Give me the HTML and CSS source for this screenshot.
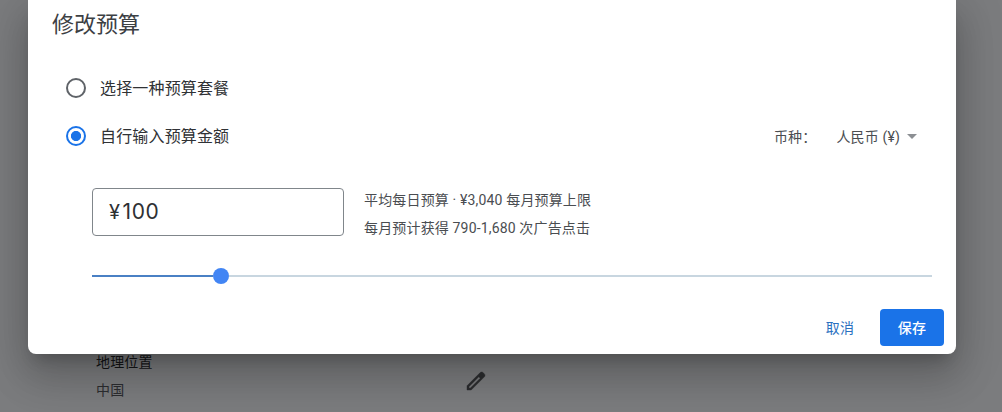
FILE: index.html
```
<!DOCTYPE html>
<html lang="zh-CN">
<head>
  <meta charset="utf-8">
  <title>修改预算</title>
  <link rel="stylesheet" href="styles.css">
</head>
<body>
  <div class="page">
    <div class="setting">
      <div class="setting-text">
        <div class="setting-name">地理位置</div>
        <div class="setting-value">中国</div>
      </div>
      <svg class="edit-icon" viewBox="0 0 24 24">
        <path d="M20.41 4.94l-1.35-1.35c-.78-.78-2.05-.78-2.83 0L3 16.82V21h4.18L20.41 7.77c.79-.78.79-2.05 0-2.83zM6.41 19.06L5 19v-1.36l9.82-9.82 1.41 1.41-9.82 9.83z"/>
      </svg>
    </div>
  </div>

  <div class="dialog">
    <div class="title">修改预算</div>
    <div class="option">
      <span class="radio"></span>
      <span class="option-label">选择一种预算套餐</span>
    </div>
    <div class="option">
      <span class="radio checked"></span>
      <span class="option-label">自行输入预算金额</span>
      <div class="currency">
        <span class="currency-label">币种：</span>
        <span>人民币 (¥)</span>
        <span class="arrow"></span>
      </div>
    </div>
    <div class="budget">
      <div class="amount"><span class="yen">¥</span>100</div>
      <div class="estimate">
        <div>平均每日预算 · ¥3,040 每月预算上限</div>
        <div>每月预计获得 790-1,680 次广告点击</div>
      </div>
    </div>
    <div class="slider">
      <div class="slider-fill"></div>
      <div class="slider-knob"></div>
      <div class="slider-rest"></div>
    </div>
    <div class="actions">
      <div class="btn">取消</div>
      <div class="btn save">保存</div>
    </div>
  </div>
</body>
</html>
```

FILE: styles.css
```
body {
  margin: 0;
  height: 412px;
  overflow: hidden;
  position: relative;
  font-family: Roboto, "Noto Sans CJK SC", sans-serif;
  font-size: 14px;
  letter-spacing: 0.16px;
  color: #3c4043;
  background-color: #7b7c7e;
}

.page {
  padding: 348px 0 0 96px;
}

.setting {
  display: flex;
  line-height: 28px;
}

.setting-text {
  width: 368px;
}

.setting-name {
  color: #151617;
}

.setting-value {
  color: #2c2d30;
}

.edit-icon {
  width: 24px;
  height: 24px;
  margin-top: 21px;
  fill: #2b2c2e;
  stroke: #2b2c2e;
  stroke-width: 0.4;
}

/* dialog hangs from above the top edge */
.dialog {
  position: absolute;
  top: 0;
  left: 28px;
  width: 928px;
  height: 354px;
  box-sizing: border-box;
  background-color: #fff;
  border-radius: 0 0 8px 8px;
  box-shadow: 0 11px 15px -7px rgba(0, 0, 0, 0.2), 0 24px 38px 3px rgba(0, 0, 0, 0.14), 0 9px 46px 8px rgba(0, 0, 0, 0.12);
}

.title {
  padding: 9px 24px 23px;
  font-size: 22px;
  line-height: 32px;
  letter-spacing: 0;
}

.option {
  display: flex;
  align-items: center;
  height: 48px;
  padding: 0 39px 0 38px;
  color: #303235;
}

.option-label {
  padding-bottom: 2px;
  font-size: 16px;
}

.radio {
  width: 20px;
  height: 20px;
  box-sizing: border-box;
  margin-right: 14px;
  border: 2px solid #5f6368;
  border-radius: 50%;
}

.radio.checked {
  border-color: #1a73e8;
  background: radial-gradient(circle, #1a73e8 4.7px, #fff 5.4px);
}

.currency {
  display: flex;
  align-items: center;
  margin-left: auto;
  color: #4a4d51;
}

.currency-label {
  margin-right: 20px;
}

.arrow {
  margin-left: 7px;
  border: 5px solid transparent;
  border-top-color: #8c8f93;
  border-bottom: 0;
}

.budget {
  display: flex;
  padding: 28px 64px 0;
}

.amount {
  width: 252px;
  height: 48px;
  box-sizing: border-box;
  padding-left: 16px;
  border: 1px solid #80868b;
  border-radius: 4px;
  font-family: Inter, sans-serif;
  font-size: 21px;
  line-height: 46px;
  letter-spacing: 0.6px;
  color: #2e3033;
}

.yen {
  font-size: 20px;
  margin-right: 2px;
}

.estimate {
  margin: -2px 0 0 20px;
  line-height: 28px;
  color: #4a4d51;
}

.slider {
  display: flex;
  align-items: center;
  height: 16px;
  padding: 0 24px 0 64px;
  margin-top: 26px;
}

.slider-fill {
  width: 121px;
  height: 2px;
  background-color: #4a80c4;
}

.slider-knob {
  width: 16px;
  height: 16px;
  border-radius: 50%;
  background-color: #4285f4;
}

.slider-rest {
  flex: 1;
  height: 2px;
  background-color: #c8d6e0;
}

.actions {
  display: flex;
  justify-content: flex-end;
  padding: 25px 12px 0;
}

.btn {
  width: 64px;
  height: 37px;
  border-radius: 4px;
  line-height: 38px;
  text-align: center;
  color: #2a70c0;
}

.save {
  margin-left: 8px;
  font-weight: 500;
  color: #fff;
  background-color: #1a73e8;
}
```
